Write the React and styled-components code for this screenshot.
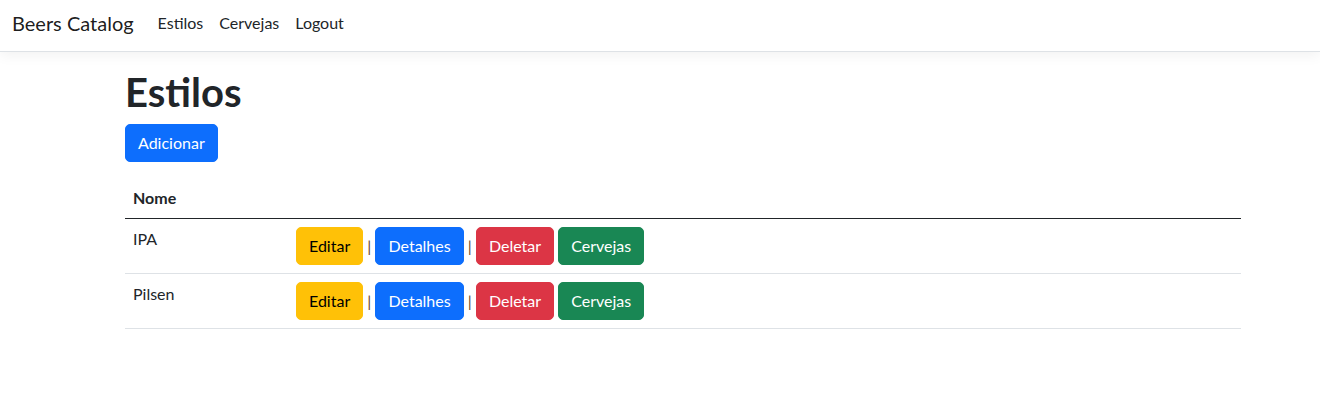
import React from 'react';
import styled, { createGlobalStyle } from 'styled-components';

const GlobalStyle = createGlobalStyle`
	body {
		margin: 0;
		background: #fff;
		color: #212529;
		font-family: Lato, 'Liberation Sans', Arial, sans-serif;
		font-size: 16px;
		line-height: 1.5;
	}
`;

const Navbar = styled.header`
	height: 45px;
	display: flex;
	align-items: center;
	padding: 0 12px 6px;
	background: #fff;
	border-bottom: 1px solid #dee2e6;
	box-shadow: 0 4px 12px rgba(0, 0, 0, 0.05);
	margin-bottom: 16px;
`;

const Brand = styled.a`
	font-size: 20px;
	line-height: 30px;
	color: rgba(0, 0, 0, 0.9);
	text-decoration: none;
	margin-right: 16px;
`;

const NavLink = styled.a`
	padding: 8px;
	color: #212529;
	text-decoration: none;
	line-height: 24px;
`;

const Main = styled.main`
	width: 1116px;
	margin-left: 125px;
`;

const Title = styled.h1`
	font-size: 40px;
	font-weight: 700;
	line-height: 48px;
	margin: 0 0 8px;
`;

const colors = {
	primary: { bg: '#0d6efd', fg: '#fff' },
	warning: { bg: '#ffc107', fg: '#000' },
	danger: { bg: '#dc3545', fg: '#fff' },
	success: { bg: '#198754', fg: '#fff' },
};

const Button = styled.a`
	display: inline-block;
	padding: 6px 12px;
	font-size: 16px;
	line-height: 24px;
	border: 1px solid ${p => colors[p.$variant].bg};
	border-radius: 5px;
	background: ${p => colors[p.$variant].bg};
	color: ${p => colors[p.$variant].fg};
	text-decoration: none;
	vertical-align: middle;
`;

const Actions = styled.p`
	margin: 0 0 16px;
`;

const Table = styled.table`
	width: 100%;
	border-collapse: collapse;
	text-align: left;
`;

const Th = styled.th`
	padding: 8px;
	font-weight: 700;
	border-bottom: 1px solid #212529;
`;

const Td = styled.td`
	padding: 8px;
	vertical-align: top;
	border-bottom: 1px solid #dee2e6;
	width: ${p => p.$width || 'auto'};
`;

const Sep = styled.span`
	color: #6b4a2a;
	vertical-align: middle;
`;

const estilos = ['IPA', 'Pilsen'];

export default function App() {
	return (
		<>
			<GlobalStyle />
			<Navbar>
				<Brand href="#">Beers Catalog</Brand>
				<NavLink href="#">Estilos</NavLink>
				<NavLink href="#">Cervejas</NavLink>
				<NavLink href="#">Logout</NavLink>
			</Navbar>
			<Main>
				<Title>Estilos</Title>
				<Actions>
					<Button $variant="primary" href="#">Adicionar</Button>
				</Actions>
				<Table>
					<thead>
						<tr>
							<Th>Nome</Th>
							<Th></Th>
						</tr>
					</thead>
					<tbody>
						{estilos.map(nome => (
							<tr key={nome}>
								<Td $width="147px">{nome}</Td>
								<Td>
									<Button $variant="warning" href="#">Editar</Button> <Sep>|</Sep>{' '}
									<Button $variant="primary" href="#">Detalhes</Button> <Sep>|</Sep>{' '}
									<Button $variant="danger" href="#">Deletar</Button>{' '}
									<Button $variant="success" href="#">Cervejas</Button>
								</Td>
							</tr>
						))}
					</tbody>
				</Table>
			</Main>
		</>
	);
}
